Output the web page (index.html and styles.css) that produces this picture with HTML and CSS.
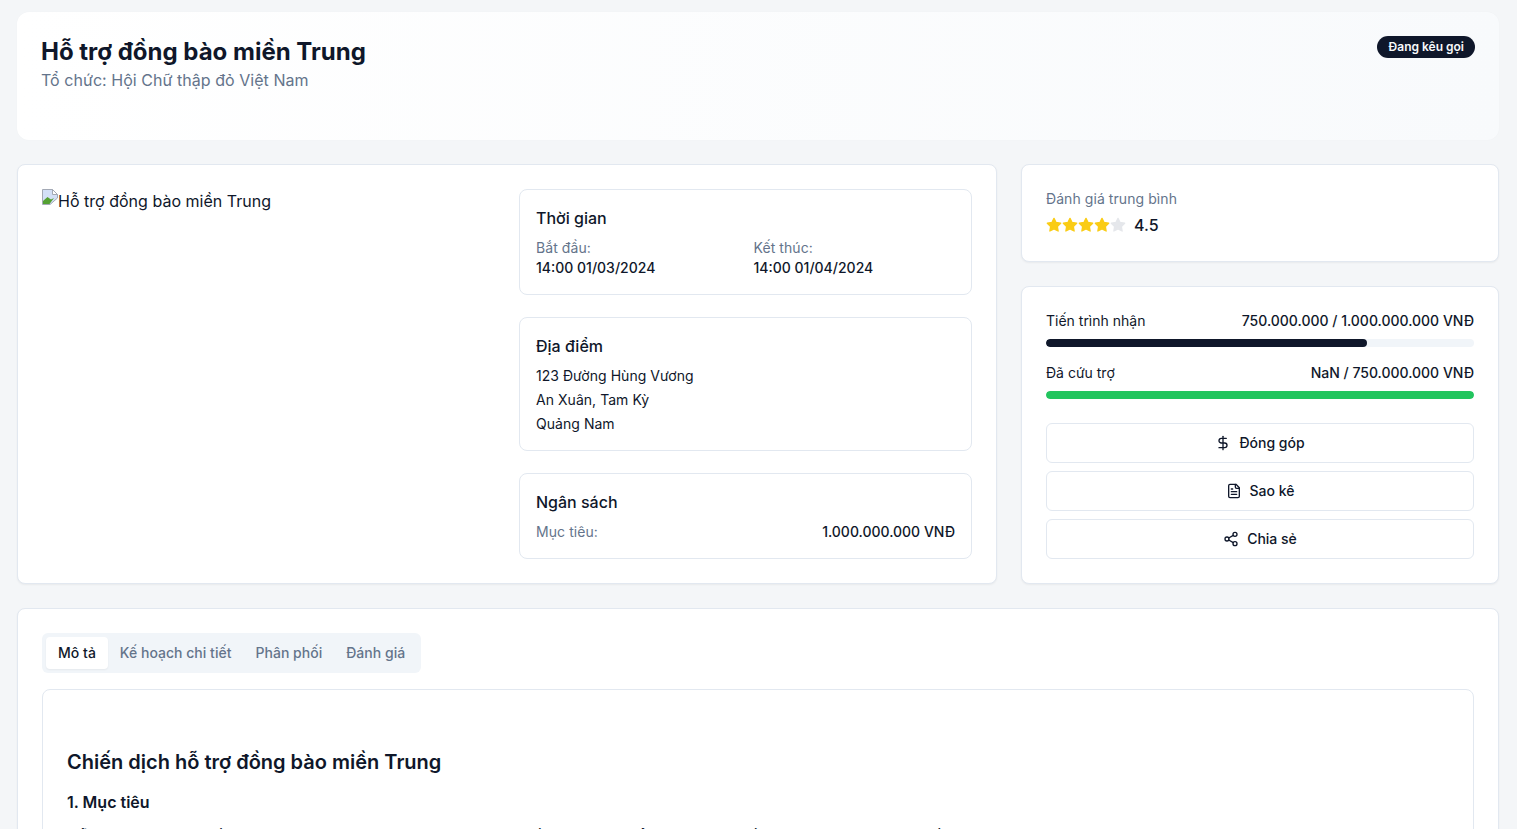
FILE: index.html
```html
<!DOCTYPE html>
<html lang="vi">
<head>
    <meta charset="UTF-8">
    <meta name="viewport" content="width=device-width, initial-scale=1.0">
    <title>Hỗ trợ đồng bào miền Trung</title>
    <link rel="stylesheet" href="styles.css">
</head>
<body>

<div class="page">
    <!-- Campaign header -->
    <header class="hero">
        <div>
            <h1 class="hero-title">Hỗ trợ đồng bào miền Trung</h1>
            <p class="hero-org">Tổ chức: Hội Chữ thập đỏ Việt Nam</p>
        </div>
        <span class="badge">Đang kêu gọi</span>
    </header>

    <div class="main-grid">
        <section class="card overview">
            <div class="image-alt">
                <svg class="broken-img" viewBox="0 0 16 16" aria-hidden="true">
                    <path d="M0.5 0.5H10.5L15.5 5.5V9L8 15.5H0.5Z" fill="#d3e0f7" stroke="#a3a9b5"/>
                    <path d="M10.5 0.5V5.5H15.5Z" fill="#fff" stroke="#a3a9b5"/>
                    <path d="M1 15V12L5.5 8L9 10.5L12 9L7.5 15Z" fill="#54a132"/>
                </svg>Hỗ trợ đồng bào miền Trung
            </div>

            <div class="info-stack">
                <div class="info-box">
                    <h3 class="info-title">Thời gian</h3>
                    <div class="time-grid">
                        <div>
                            <p class="muted">Bắt đầu:</p>
                            <p class="strong">14:00 01/03/2024</p>
                        </div>
                        <div>
                            <p class="muted">Kết thúc:</p>
                            <p class="strong">14:00 01/04/2024</p>
                        </div>
                    </div>
                </div>

                <div class="info-box">
                    <h3 class="info-title">Địa điểm</h3>
                    <div class="address">
                        <p>123 Đường Hùng Vương</p>
                        <p>An Xuân, Tam Kỳ</p>
                        <p>Quảng Nam</p>
                    </div>
                </div>

                <div class="info-box">
                    <h3 class="info-title">Ngân sách</h3>
                    <div class="row-between">
                        <p class="muted">Mục tiêu:</p>
                        <p class="strong">1.000.000.000 VNĐ</p>
                    </div>
                </div>
            </div>
        </section>

        <aside class="side">
            <section class="card rating">
                <p class="muted">Đánh giá trung bình</p>
                <div class="rating-row">
                    <div class="stars">
                        <svg class="star on" viewBox="0 0 24 24"><path d="M12 2l3.09 6.26L22 9.27l-5 4.87 1.18 6.88L12 17.77l-6.18 3.25L7 14.14 2 9.27l6.91-1.01z"/></svg>
                        <svg class="star on" viewBox="0 0 24 24"><path d="M12 2l3.09 6.26L22 9.27l-5 4.87 1.18 6.88L12 17.77l-6.18 3.25L7 14.14 2 9.27l6.91-1.01z"/></svg>
                        <svg class="star on" viewBox="0 0 24 24"><path d="M12 2l3.09 6.26L22 9.27l-5 4.87 1.18 6.88L12 17.77l-6.18 3.25L7 14.14 2 9.27l6.91-1.01z"/></svg>
                        <svg class="star on" viewBox="0 0 24 24"><path d="M12 2l3.09 6.26L22 9.27l-5 4.87 1.18 6.88L12 17.77l-6.18 3.25L7 14.14 2 9.27l6.91-1.01z"/></svg>
                        <svg class="star" viewBox="0 0 24 24"><path d="M12 2l3.09 6.26L22 9.27l-5 4.87 1.18 6.88L12 17.77l-6.18 3.25L7 14.14 2 9.27l6.91-1.01z"/></svg>
                    </div>
                    <span class="rating-value">4.5</span>
                </div>
            </section>

            <section class="card progress-card">
                <div class="row-between progress-label">
                    <span>Tiến trình nhận</span>
                    <span class="strong">750.000.000 / 1.000.000.000 VNĐ</span>
                </div>
                <div class="bar"><div class="bar-fill" style="width: 75%"></div></div>

                <div class="row-between progress-label">
                    <span>Đã cứu trợ</span>
                    <span class="strong">NaN / 750.000.000 VNĐ</span>
                </div>
                <div class="bar"><div class="bar-fill green" style="width: 100%"></div></div>

                <div class="actions">
                    <button class="btn" type="button">
                        <svg class="icon" viewBox="0 0 24 24"><line x1="12" x2="12" y1="2" y2="22"/><path d="M17 5H9.5a3.5 3.5 0 0 0 0 7h5a3.5 3.5 0 0 1 0 7H6"/></svg>
                        Đóng góp
                    </button>
                    <button class="btn" type="button">
                        <svg class="icon" viewBox="0 0 24 24"><path d="M15 2H6a2 2 0 0 0-2 2v16a2 2 0 0 0 2 2h12a2 2 0 0 0 2-2V7Z"/><path d="M14 2v4a2 2 0 0 0 2 2h4"/><path d="M10 9H8"/><path d="M16 13H8"/><path d="M16 17H8"/></svg>
                        Sao kê
                    </button>
                    <button class="btn" type="button">
                        <svg class="icon" viewBox="0 0 24 24"><circle cx="18" cy="5" r="3"/><circle cx="6" cy="12" r="3"/><circle cx="18" cy="19" r="3"/><line x1="8.59" x2="15.42" y1="13.51" y2="17.49"/><line x1="15.41" x2="8.59" y1="6.51" y2="10.49"/></svg>
                        Chia sẻ
                    </button>
                </div>
            </section>
        </aside>
    </div>

    <section class="card details">
        <div class="tabs">
            <button class="tab active" type="button">Mô tả</button>
            <button class="tab" type="button">Kế hoạch chi tiết</button>
            <button class="tab" type="button">Phân phối</button>
            <button class="tab" type="button">Đánh giá</button>
        </div>

        <div class="tab-panel">
            <h2 class="panel-title">Chiến dịch hỗ trợ đồng bào miền Trung</h2>
            <h3 class="panel-sub">1. Mục tiêu</h3>
            <p class="panel-text">Hỗ trợ người dân miền Trung bị ảnh hưởng bởi thiên tai, giúp đồng bào sớm ổn định cuộc sống và khôi phục sản xuất sau mùa bão lũ kéo dài vừa qua.</p>
        </div>
    </section>
</div>

</body>
</html>
```

FILE: styles.css
```css
* {
    box-sizing: border-box;
}
html, body {
    height: 100%;
    overflow: hidden;
}
body {
    margin: 0;
    font-family: Inter, "Noto Sans", sans-serif;
    font-size: 14px;
    line-height: 20px;
    background-color: #f4f6f8;
    color: #0f172a;
}
p, h1, h2, h3 {
    margin: 0;
}
.page {
    display: flex;
    flex-direction: column;
    gap: 24px;
    padding: 12px 18px 0 17px;
}
.card {
    background-color: #fff;
    border: 1px solid #e2e8f0;
    border-radius: 8px;
    box-shadow: 0 1px 2px rgba(0, 0, 0, 0.05);
    padding: 24px;
}

/* header */
.hero {
    display: flex;
    justify-content: space-between;
    align-items: flex-start;
    height: 128px;
    padding: 24px;
    border-radius: 12px;
    background: linear-gradient(to right, #fff, #f8fafc);
    box-shadow: 0 0 1px rgba(15, 23, 42, 0.06);
}
.hero-title {
    font-size: 24px;
    line-height: 32px;
    font-weight: 700;
}
.hero-org {
    font-size: 16px;
    line-height: 24px;
    letter-spacing: 0.04px;
    color: #64748b;
}
.badge {
    background-color: #0f172a;
    color: #f8fafc;
    font-size: 12px;
    line-height: 16px;
    font-weight: 600;
    padding: 3px 11px 3px 11.5px;
    border-radius: 999px;
}

/* main area */
.main-grid {
    display: grid;
    grid-template-columns: repeat(3, 1fr);
    gap: 24px;
}
.overview {
    grid-column: span 2;
    display: grid;
    grid-template-columns: 1fr 1fr;
    gap: 24px;
}
.image-alt {
    font-size: 16px;
    line-height: 24px;
    letter-spacing: 0.02px;
}
.broken-img {
    width: 16px;
    height: 16px;
    vertical-align: 2px;
}
.info-stack {
    display: flex;
    flex-direction: column;
    gap: 22px;
}
.info-box {
    border: 1px solid #e2e8f0;
    border-radius: 8px;
    padding: 16px;
}
.info-title {
    font-size: 16px;
    line-height: 24px;
    font-weight: 500;
    margin-bottom: 8px;
}
.time-grid {
    display: grid;
    grid-template-columns: 1fr 1fr;
    gap: 16px;
}
.muted {
    color: #64748b;
    letter-spacing: 0.07px;
}
.strong {
    font-weight: 500;
}
.address {
    display: flex;
    flex-direction: column;
    gap: 4px;
    letter-spacing: 0.04px;
}
.row-between {
    display: flex;
    justify-content: space-between;
}

/* right column */
.side {
    display: flex;
    flex-direction: column;
    gap: 24px;
}
.rating-row {
    display: flex;
    align-items: center;
    gap: 8px;
    margin-top: 4px;
}
.stars {
    display: flex;
}
.star {
    width: 16px;
    height: 16px;
    fill: #e5e7eb;
    stroke: #e5e7eb;
    stroke-width: 2;
    stroke-linejoin: round;
}
.star.on {
    fill: #facc15;
    stroke: #facc15;
}
.rating-value {
    font-size: 16px;
    line-height: 24px;
    font-weight: 500;
}
.progress-label {
    margin-bottom: 8px;
}
.bar {
    height: 8px;
    background-color: #f1f5f9;
    border-radius: 999px;
    overflow: hidden;
    margin-bottom: 16px;
}
.bar-fill {
    height: 100%;
    background-color: #0f172a;
    border-radius: 999px;
}
.bar-fill.green {
    background-color: #22c55e;
}
.actions {
    display: flex;
    flex-direction: column;
    gap: 8px;
    margin-top: 24px;
}
.btn {
    display: flex;
    align-items: center;
    justify-content: center;
    gap: 8px;
    height: 40px;
    background-color: #fff;
    border: 1px solid #e2e8f0;
    border-radius: 6px;
    color: #0f172a;
    font-family: inherit;
    font-size: 14px;
    line-height: 20px;
    font-weight: 500;
}
.icon {
    width: 16px;
    height: 16px;
    fill: none;
    stroke: currentColor;
    stroke-width: 2;
    stroke-linecap: round;
    stroke-linejoin: round;
}

/* tabs */
.tabs {
    display: inline-flex;
    height: 40px;
    padding: 4px;
    background-color: #f1f5f9;
    border-radius: 6px;
}
.tab {
    padding: 0 12px;
    background: none;
    border: none;
    border-radius: 4px;
    color: #64748b;
    font-family: inherit;
    font-size: 14px;
    line-height: 20px;
    letter-spacing: 0.02px;
    font-weight: 500;
}
.tab.active {
    background-color: #fff;
    color: #0f172a;
    box-shadow: 0 1px 2px rgba(0, 0, 0, 0.05);
}
.tab-panel {
    margin-top: 16px;
    border: 1px solid #e2e8f0;
    border-radius: 8px;
    padding: 58px 24px 24px;
}
.panel-title {
    font-size: 20px;
    line-height: 28px;
    font-weight: 600;
}
.panel-sub {
    font-size: 16px;
    line-height: 24px;
    font-weight: 600;
    margin-top: 14px;
}
.panel-text {
    margin-top: 11px;
    font-size: 16px;
    line-height: 24px;
}
```
